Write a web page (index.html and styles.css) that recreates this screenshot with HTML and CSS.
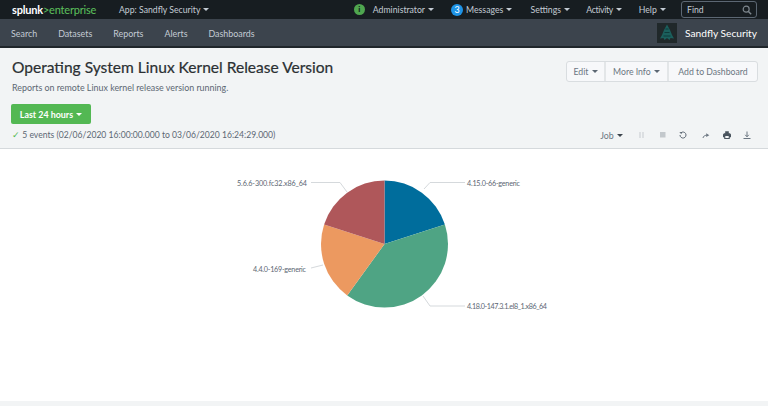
FILE: index.html
```html
<!DOCTYPE html>
<html lang="en">
<head>
<meta charset="utf-8">
<title>Operating System Linux Kernel Release Version</title>
<link rel="stylesheet" href="styles.css">
</head>
<body>
<header class="topbar">
  <div class="logo"><span class="logo-a">splunk</span><span class="logo-b">&gt;enterprise</span></div>
  <div class="menu app">App: Sandfly Security <i class="caret"></i></div>
  <div class="spacer"></div>
  <span class="info-dot">i</span>
  <div class="menu admin">Administrator <i class="caret"></i></div>
  <span class="msg-dot">3</span>
  <div class="menu msgs">Messages <i class="caret"></i></div>
  <div class="menu settings">Settings <i class="caret"></i></div>
  <div class="menu activity">Activity <i class="caret"></i></div>
  <div class="menu help">Help <i class="caret"></i></div>
  <div class="find"><span>Find</span>
    <svg class="find-icon" viewBox="0 0 12 12" width="10" height="10"><circle cx="5" cy="5" r="3.6" fill="none" stroke="#7d868d" stroke-width="1.4"/><path d="M7.700 7.700 11 11" stroke="#7d868d" stroke-width="1.700"/></svg>
  </div>
</header>
<nav class="navbar">
  <a>Search</a><a>Datasets</a><a>Reports</a><a>Alerts</a><a>Dashboards</a>
  <div class="spacer"></div>
  <div class="app-logo">
    <svg viewBox="0 0 20 20" width="20" height="20"><rect width="20" height="20" fill="#20282a"/><path d="M10 1.500 13 7l2 5 2 3.500-3.500-.500L12.500 17 10 15l-2.500 2L6.500 15 3 15.500 5 12l2-5z" fill="#1b5f5c"/><path d="M8.500 6h3M7.500 9.500h5M6.500 13h7" stroke="#0f3b3a" stroke-width="1"/></svg>
  </div>
  <div class="app-name">Sandfly Security</div>
</nav>
<section class="head">
  <div class="title-row">
    <div class="titles">
      <h1>Operating System Linux Kernel Release Version</h1>
      <p>Reports on remote Linux kernel release version running.</p>
    </div>
    <div class="btn-group">
      <button class="edit">Edit <i class="caret dark"></i></button>
      <button class="more">More Info <i class="caret dark"></i></button>
      <button class="add">Add to Dashboard</button>
    </div>
  </div>
  <button class="range">Last 24 hours <i class="caret white"></i></button>
  <div class="status-row">
    <div class="status"><span class="tick">✓</span> 5 events (02/06/2020 16:00:00.000 to 03/06/2020 16:24:29.000)</div>
    <div class="job">
      <span class="job-menu">Job <i class="caret dark2"></i></span>
      <svg class="ic-pause" viewBox="0 0 10 10" width="10" height="10"><path d="M3 2v6M6 2v6" stroke="#d0d4d8" stroke-width="1.300"/></svg>
      <svg class="ic-stop" viewBox="0 0 10 10" width="10" height="10"><rect x="2" y="2" width="5.500" height="5.500" fill="#c3c8cc"/></svg>
      <svg class="ic-redo" viewBox="0 0 10 10" width="10" height="10"><path d="M3 2.800A3 3 0 1 1 2 5" fill="none" stroke="#5c6773" stroke-width="1"/><path d="M1.300 2.200 3.800 1.900 3.500 4.300z" fill="#5c6773"/></svg>
      <svg class="ic-share" viewBox="0 0 10 10" width="10" height="10"><path d="M2 8C2.400 6.200 3.600 5.300 5.500 5.300" fill="none" stroke="#6b7681" stroke-width="1"/><path d="M5.200 3.300 8.300 5.200 5.200 7z" fill="#6b7681"/></svg>
      <svg class="ic-print" viewBox="0 0 10 10" width="10" height="10"><path d="M3.200 1.200h3.600v2h1.200l1 1.200v2.800H7.800V9H2.200V7.200H1V4.400l1-1.200h1.200z" fill="#4a545e"/><rect x="3.300" y="6" width="3.400" height="2" fill="#f2f4f5"/></svg>
      <svg viewBox="0 0 10 10" width="10" height="10"><path d="M5 1.500v5M3.200 4.800 5 6.800l1.800-2M1.500 8.500h7" fill="none" stroke="#6b7681" stroke-width="1"/></svg>
    </div>
  </div>
</section>
<main class="chart">
  <svg class="pie" viewBox="0 149 768 252" width="768" height="252">
    <path class="leader" d="M465 182.500H430L424 189"/>
    <path class="leader" d="M311 182.500H340L347 192"/>
    <path class="leader" d="M311 268L323 265"/>
    <path class="leader" d="M465 306H430L423 296"/>
    <path fill="#006d9c" d="M384.500 244V180.500A63.500 63.500 0 0 1 444.900 224.400Z"/>
    <path fill="#4fa484" d="M384.500 244 444.900 224.400A63.500 63.500 0 0 1 347.200 295.400Z"/>
    <path fill="#ec9960" d="M384.500 244 347.200 295.400A63.500 63.500 0 0 1 324.100 224.400Z"/>
    <path fill="#af575a" d="M384.500 244 324.100 224.400A63.500 63.500 0 0 1 384.500 180.500Z"/>
    <text class="lbl" x="467" y="186" textLength="53">4.15.0-66-generic</text>
    <text class="lbl" x="467" y="309" textLength="80">4.18.0-147.3.1.el8_1.x86_64</text>
    <text class="lbl" x="237" y="186" textLength="70">5.6.6-300.fc32.x86_64</text>
    <text class="lbl" x="253" y="271.500" textLength="53">4.4.0-169-generic</text>
  </svg>
</main>
<footer class="foot"></footer>
</body>
</html>
```
FILE: styles.css
```css
* { box-sizing: border-box; }
html, body { margin: 0; padding: 0; }
body { width: 768px; height: 406px; overflow: hidden; background: #fff; font-family: Lato, "Open Sans", sans-serif; color: #3c444d; }
.spacer { flex: 1; }
.caret { display: inline-block; width: 0; height: 0; border-left: 3px solid transparent; border-right: 3px solid transparent; border-top: 3.500px solid #c3cbd4; vertical-align: 2px; margin-left: 1px; }
.caret.dark { border-top-color: #5c6773; }
.caret.dark2 { border-top-color: #3c444d; }
.caret.white { border-top-color: #fff; }

.topbar { height: 19px; background: #171d21; display: flex; align-items: center; padding-left: 12px; font-size: 8.700px; color: #c3cbd4; white-space: nowrap; }
.logo { font-size: 11px; width: 107px; letter-spacing: -0.200px; }
.logo-a { color: #fff; font-weight: 700; }
.logo-b { color: #5cc05c; }
.menu { color: #c3cbd4; }
.info-dot { width: 11px; height: 11px; border-radius: 50%; background: #4fa64f; color: #10241a; font-size: 8px; font-weight: 900; text-align: center; line-height: 11px; margin-right: 8px; }
.msg-dot { width: 12px; height: 12px; border-radius: 50%; background: #1e93e6; color: #fff; font-size: 9px; text-align: center; line-height: 12px; margin-left: 17px; margin-right: 3px; }
.settings { margin-left: 18px; }
.activity { margin-left: 16px; letter-spacing: -0.300px; }
.help { margin-left: 17px; }
.find { width: 76px; height: 17px; margin-left: 15px; margin-right: 11px; border: 1px solid #5c6773; border-radius: 3px; display: flex; align-items: center; justify-content: space-between; padding: 0 4px 0 5px; color: #c3cbd4; }
.find-icon { display: block; }

.navbar { height: 29px; background: #3c444d; border-bottom: 2px solid #20262b; display: flex; align-items: center; padding: 1px 11px 0 11px; font-size: 8.900px; color: #c3cbd4; }
.navbar a { margin-right: 21px; }
.app-logo { width: 20px; height: 20px; margin-right: 8px; }
.app-logo svg { display: block; }
.app-name { font-size: 10.200px; color: #fff; }

.head { height: 101px; background: #f2f4f5; border-bottom: 1px solid #d5d9dc; padding: 0 11px; }
.title-row { display: flex; justify-content: space-between; height: 56px; }
.titles { padding-left: 1px; }
.titles h1 { margin: 9px 0 0; font-size: 15.550px; line-height: 20px; font-weight: 400; color: #2b3033; -webkit-text-stroke: 0.200px #2b3033; }
.titles p { margin: 5px 0 0; font-size: 8.900px; line-height: 11px; color: #5c6773; }
.btn-group { display: flex; height: 21px; margin-top: 13px; border: 1px solid #d9dde0; border-radius: 3px; background: #f7f8fa; margin-right: -1px; }
.btn-group button { font: inherit; font-size: 8.700px; color: #6b7681; background: transparent; border: 0; padding: 0; height: 19px; }
.edit { width: 39px; border-right: 2px solid #e3e6e8 !important; }
.more { width: 63px; border-right: 2px solid #e3e6e8 !important; }
.add { width: 88px; }
.range { display: block; width: 80px; height: 20px; background: #53b853; border: 0; border-radius: 2px; font: inherit; font-size: 8.900px; font-weight: 700; color: #fff; padding: 0; }
.status-row { display: flex; justify-content: space-between; align-items: center; margin-top: 4px; height: 14px; padding-left: 1px; }
.status { font-size: 8.600px; color: #5c6773; white-space: nowrap; }
.tick { color: #53b853; }
.job { display: flex; align-items: center; margin-right: 5px; }
.job-menu { font-size: 8.800px; color: #6b7681; margin-right: 14px; white-space: nowrap; }
.job svg { display: block; margin-right: 10px; }
.job svg:last-child { margin-right: 0; }
.job .ic-pause { margin-right: 11px; }
.job .ic-stop { margin-right: 10px; }
.job .ic-redo { margin-right: 13px; }
.job .ic-share { margin-right: 11px; }

.chart { height: 252px; background: #fff; }
.pie { display: block; }
.leader { fill: none; stroke: #d5d9dc; stroke-width: 1; }
.lbl { font-family: Lato, "Open Sans", sans-serif; font-size: 7.200px; fill: #5c6773; }
.foot { height: 6px; background: #f2f4f5; }
```
